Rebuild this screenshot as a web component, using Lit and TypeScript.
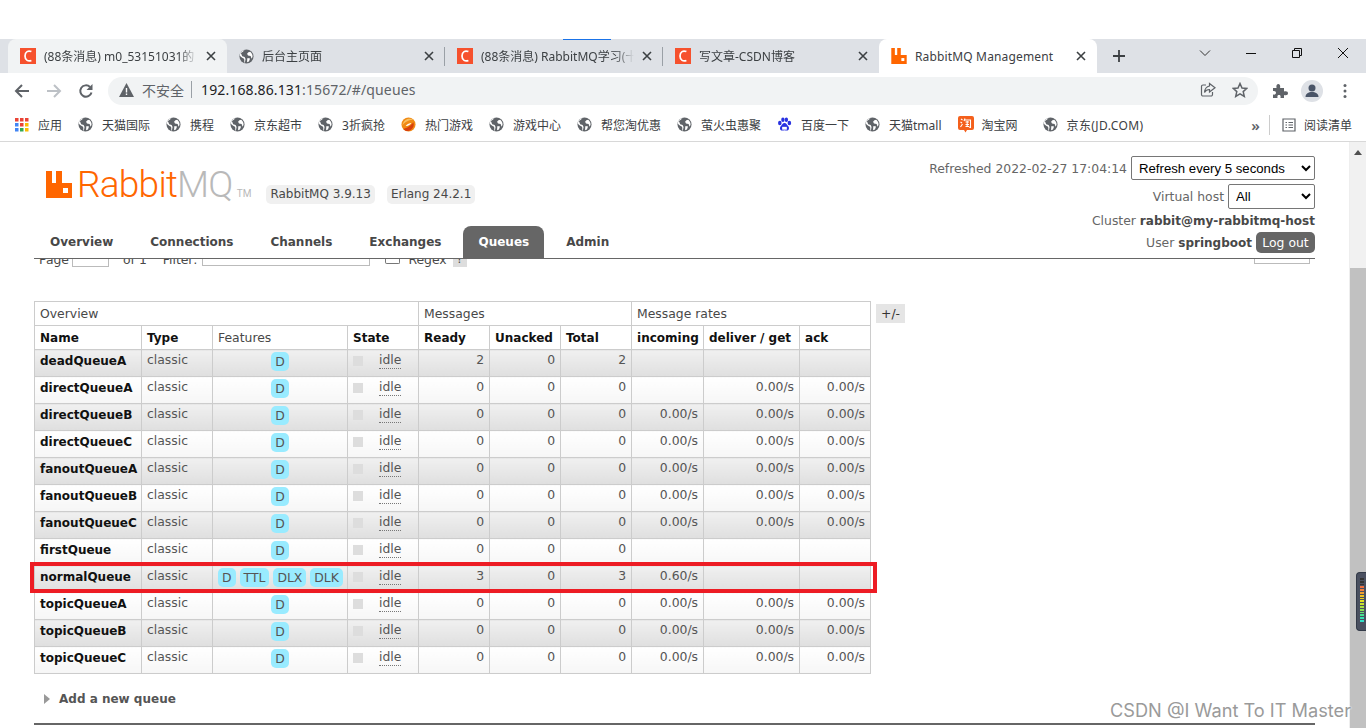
import { LitElement, html, css, svg } from "lit";
import { customElement } from "lit/decorators.js";

const globe = html`<svg class="ico" viewBox="0 0 16 16"><circle cx="8" cy="8" r="7.5" fill="#5f6368"/><path d="M6 1.2C4.8 2.6 3.2 3.2 2 4.2L3.4 7.6 6 8.4 7 10.6 6.2 14.8C5 14.6 6.4 11 5 10.2 3.6 9.6 1.6 8.6 1 7 .8 4 3.2 1.4 6 1.2ZM10 3.4 8.6 5 9.6 7 12.4 7.4 13.4 10.4 14.4 8.6C14.8 6.6 13.8 4.2 12 2.8Z" fill="#fff"/><path d="M9 9.6 11.8 10 10.6 13.2 8.6 14 8.8 11Z" fill="#fff"/></svg>`;
const csdn = html`<svg class="fav" viewBox="0 0 16 16"><rect width="16" height="16" fill="#f6512d"/><path d="M11.4 3.6C8.4 2.2 5 3.6 5 8s3.4 5.8 6.4 4.4" fill="none" stroke="#fff" stroke-width="1.7"/></svg>`;
const rabbitPath = "M0 0h6v12h4V0h6v12h10v15H0Z";
const x = html`<svg class="x" viewBox="0 0 10 10"><path d="M1 1l8 8M9 1l-8 8" stroke="#3c4043" stroke-width="1.6" fill="none"/></svg>`;

const fire = html`<svg class="ico" viewBox="0 0 16 16"><circle cx="8" cy="8" r="7.5" fill="#f08a14"/><path d="M1.5 9C4 5 9 3 13.5 3 10 1 3 1.500 1.500 9Z" fill="#f8c060"/><path d="M2.500 12.500C6 12 11 9 13 5.500 15 9 12 14.500 7 15 5 15 3.500 14 2.500 12.500Z" fill="#d8400c"/><path d="M5 9.500C7 7.500 9 6.500 11 6.500 9.500 8.500 7.500 10 5 9.500Z" fill="#fff"/></svg>`;
const paw = html`<svg class="ico" viewBox="0 0 16 16" fill="#2932e1"><ellipse cx="3" cy="6.500" rx="1.900" ry="2.400"/><ellipse cx="6.300" cy="2.800" rx="1.800" ry="2.400"/><ellipse cx="10" cy="2.800" rx="1.800" ry="2.400"/><ellipse cx="13.200" cy="6.500" rx="1.900" ry="2.400"/><path d="M8 6.500c-2 0-2.400 2-3.800 3-1.600 1.200-1.400 5 1.300 5 1 0 1.700-.4 2.500-.4s1.500.4 2.500.4c2.700 0 2.900-3.800 1.300-5C10.400 8.500 10 6.500 8 6.500Z"/><path d="M5.500 10.500h5v3h-5Z" fill="#fff"/></svg>`;
const taoIco = html`<svg class="ico tao" viewBox="0 0 16 17"><path d="M2 0h12a2 2 0 0 1 2 2v10a2 2 0 0 1-2 2H9l-1.500 2.500L6 14H2a2 2 0 0 1-2-2V2a2 2 0 0 1 2-2Z" fill="#f4601c"/><path d="M3 3l1.500 1M2.500 6l1.500 1M2.500 11l2-3M7 2.500 6 5M6.500 4H12.500V11.500L11 11M7.500 6h3.500M7.500 8.500h3.500M9.200 5v5M7.500 10.500h3.500" stroke="#fff" stroke-width="1.100" fill="none"/></svg>`;

type Bm = { t: string; i?: any; c?: string };
const bookmarks: Bm[] = [
  { t: "天猫国际" }, { t: "携程" }, { t: "京东超市" }, { t: "3折疯抢" },
  { t: "热门游戏", i: fire }, { t: "游戏中心" }, { t: "帮您淘优惠" }, { t: "萤火虫惠聚" },
  { t: "百度一下", i: paw }, { t: "天猫tmall" }, { t: "淘宝网", i: taoIco, c: "tao-item" }, { t: "京东(JD.COM)", c: "wide" },
];

type Row = { n: string; f?: string[]; r: number; u: number; t: number; inc: string; del: string; ack: string };
const z = "0.00/s";
const rows: Row[] = [
  { n: "deadQueueA", r: 2, u: 0, t: 2, inc: "", del: "", ack: "" },
  { n: "directQueueA", r: 0, u: 0, t: 0, inc: "", del: z, ack: z },
  { n: "directQueueB", r: 0, u: 0, t: 0, inc: z, del: z, ack: z },
  { n: "directQueueC", r: 0, u: 0, t: 0, inc: z, del: z, ack: z },
  { n: "fanoutQueueA", r: 0, u: 0, t: 0, inc: z, del: z, ack: z },
  { n: "fanoutQueueB", r: 0, u: 0, t: 0, inc: z, del: z, ack: z },
  { n: "fanoutQueueC", r: 0, u: 0, t: 0, inc: z, del: z, ack: z },
  { n: "firstQueue", r: 0, u: 0, t: 0, inc: "", del: "", ack: "" },
  { n: "normalQueue", f: ["D", "TTL", "DLX", "DLK"], r: 3, u: 0, t: 3, inc: "0.60/s", del: "", ack: "" },
  { n: "topicQueueA", r: 0, u: 0, t: 0, inc: z, del: z, ack: z },
  { n: "topicQueueB", r: 0, u: 0, t: 0, inc: z, del: z, ack: z },
  { n: "topicQueueC", r: 0, u: 0, t: 0, inc: z, del: z, ack: z },
];

const meter = ["#333", "#333", "#333", "#f07040", "#f08040", "#f0a030", "#f0c020", "#e8d020", "#e0e020", "#c8e030", "#a8e040", "#88e050", "#68e070", "#48e090", "#38e0b0", "#30e0c8"];

@customElement("app-root")
export class AppRoot extends LitElement {
  static styles = css`
    :host { display: block; width: 1366px; height: 728px; overflow: hidden; background: #fff; position: relative; font-family: "Noto Sans", "Noto Sans CJK SC", sans-serif; }
    .blank { height: 39px; background: #fff; }
    .tabstrip { height: 34px; background: #dee1e6; display: flex; padding-left: 8px; font-size: 12px; color: #3c4043; position: relative; }
    .blue { position: absolute; left: 563px; top: 0; width: 48px; height: 1px; background: #1a73e8; }
    .tab { width: 218px; display: flex; align-items: center; padding: 0 11px 0 12px; box-sizing: border-box; gap: 8px; border-radius: 8px 8px 0 0; position: relative; white-space: nowrap; }
    .tab .label { flex: 1; overflow: hidden; -webkit-mask-image: linear-gradient(90deg, #000 88%, transparent); }
    .tab.hover { background: #f1f3f4; width: 219px; }
    .tab.narrow { width: 216px; }
    .tab.active { background: #fff; width: 218px; }
    .tab.active .label { -webkit-mask-image: none; letter-spacing: .15px; }
    .tab.sep::after { content: ""; position: absolute; right: 0; top: 8px; height: 19px; width: 1px; background: #9aa0a6; }
    .fav { width: 16px; height: 16px; flex: none; }
    .x { width: 10px; height: 10px; flex: none; }
    .ico { width: 15px; height: 15px; flex: none; }
    .tao { height: 17px; width: 16px; }
    .plus { margin-left: 15px; align-self: center; width: 14px; height: 14px; }
    .winctl { margin-left: auto; display: flex; align-items: center; gap: 30px; padding: 0 15px 6px 0; }
    .winctl svg { width: 16px; height: 16px; display: block; }
    .toolbar { height: 35px; display: flex; align-items: center; padding-left: 14px; box-sizing: border-box; background: #fff; }
    .nav { width: 16px; height: 16px; flex: none; margin-right: 16px; }
    .nav.last { margin-right: 0; }
    .omni { margin-left: 14px; width: 1150px; height: 28px; border-radius: 14px; background: #f1f3f4; display: flex; align-items: center; padding: 0 10px 2px 11px; box-sizing: border-box; font-size: 14px; color: #5f6368; }
    .omni .warn { width: 15px; height: 14px; margin-right: 8px; }
    .omni .insec { width: 44px; font-size: 14px; }
    .omni .div { width: 1px; height: 17px; background: #9aa0a6; margin: 0 9px 0 5px; }
    .omni .url { color: #202124; font-size: 14px; letter-spacing: .12px; flex: 1; }
    .omni .url span { color: #5f6368; }
    .omni svg.r { width: 16px; height: 16px; margin-left: 16px; }
    .after { display: flex; align-items: center; margin-left: 14px; gap: 12px; }
    .after .puzzle { width: 16px; height: 16px; }
    .avatar { width: 22px; height: 22px; margin-left: 1px; }
    .kebab { width: 4px; height: 16px; margin-left: 20px; }
    .bookmarks { height: 33px; border-bottom: 1px solid #d8d8d8; display: flex; align-items: center; font-size: 12px; color: #3c4043; padding-left: 15px; white-space: nowrap; box-sizing: content-box; }
    .apps { width: 14px; height: 14px; margin-right: 9px; flex: none; }
    .apptext { margin-right: 16px; }
    .bm { display: flex; align-items: center; gap: 9px; margin-right: 16px; }
    .bm.tao-item { gap: 8px; margin-right: 25px; }
    .bm.wide { letter-spacing: .4px; margin-right: 0; }
    .more { margin-left: auto; display: flex; align-items: center; font-size: 15px; font-weight: 600; color: #5f6368; }
    .more .div { width: 1px; height: 20px; background: #ccc; margin: 0 12px 0 9px; }
    .more .lst { width: 14px; height: 14px; margin-right: 8px; }
    .more .rd { font-size: 12px; font-weight: 400; color: #3c4043; padding-right: 14px; }

    .viewport { display: flex; height: 586px; }
    .page { flex: none; width: 1349px; font-family: "DejaVu Sans", Verdana, sans-serif; font-size: 12.400px; color: #484848; overflow: hidden; position: relative; box-sizing: border-box; padding-left: 34px; }
    .scroll { flex: 1; background: #f1f1f1; position: relative; display: flex; flex-direction: column; align-items: center; border-left: 1px solid #eee; }
    .arrow { width: 0; height: 0; border: 4px solid transparent; border-bottom: 5px solid #505050; border-top: 0; margin-top: 8px; }
    .thumb { position: absolute; left: 0; right: 0; top: 126px; bottom: 0; background: #c1c1c1; }
    .meter { position: absolute; left: 1356px; top: 572px; width: 10px; height: 59px; background: #4a5060; border: 1px solid #333a48; border-right: 0; border-radius: 4px 0 0 4px; box-sizing: border-box; padding: 5px 1px 0 3px; display: flex; flex-direction: column; gap: 1px; }
    .meter i { display: block; height: 1.800px; width: 4px; }

    .head { display: flex; justify-content: space-between; width: 1281px; height: 116px; border-bottom: 1px solid #666; box-sizing: content-box; }
    .left { display: flex; flex-direction: column; }
    .brand { display: flex; align-items: flex-start; padding: 29px 0 0 12px; height: 55px; box-sizing: border-box; }
    .brand svg { width: 26px; height: 27px; flex: none; margin-right: 5px; }
    .word { font-family: "Roboto", sans-serif; font-weight: 300; font-size: 37px; line-height: 28px; letter-spacing: -.75px; color: #f60; white-space: nowrap; }
    .word b { font-weight: 300; color: #b9b9b9; }
    .word sup { font-size: 10px; color: #b9b9b9; letter-spacing: 0; vertical-align: baseline; margin-left: 4px; font-weight: 400; }
    .ver { margin: 14px 0 0 15px; display: flex; gap: 12px; white-space: nowrap; }
    .ver span { background: #f0f0f0; border-radius: 5px; height: 19px; line-height: 19px; padding: 0 4px; font-size: 12px; color: #484848; }
    .nav-tabs { display: flex; gap: 7px; margin: 29px 0 0 1px; height: 32px; font-weight: 700; font-size: 12px; color: #484848; }
    .nav-tabs span { padding: 0 15px; line-height: 33px; border-radius: 8px 8px 0 0; }
    .nav-tabs span.on { background: #666; color: #fff; }
    .right { display: flex; flex-direction: column; align-items: flex-end; padding-top: 14px; color: #666; white-space: nowrap; }
    .right .l { display: flex; align-items: center; gap: 4px; }
    .right strong { color: #484848; font-size: 12px; }
    select { border: 1px solid #767676; border-radius: 2px; box-sizing: border-box; background: #fff; color: #000; font-family: "Liberation Sans", sans-serif; font-size: 13.200px; height: 24px; padding: 0 0 0 3px; margin: 0; }
    .s1 { width: 184px; }
    .s2 { width: 87px; height: 25px; }
    .r2 { margin-top: 4px; }
    .r3 { margin-top: 4px; height: 16px; line-height: 16px; }
    .r4 { margin-top: 3px; }
    .logout { background: #666; color: #fff; border-radius: 5px; height: 21px; line-height: 21px; padding: 0 6px; font-weight: 400; font-size: 12.400px; width: 59px; box-sizing: border-box; text-align: center; }

    .clip { height: 8px; width: 1281px; overflow: hidden; position: relative; margin-bottom: 34px; }
    .peek { display: flex; align-items: flex-end; height: 8px; }
    .peek-text { margin: -6px 0 0 5px; line-height: 14px; align-self: flex-start; white-space: nowrap; }
    .peek-text.of { margin-left: 14px; }
    .peek-text.filter { margin-left: 16px; }
    .peek-text.regex { margin-left: 8px; }
    .ibox { border: 1px solid #bbb; border-top: 0; box-sizing: border-box; align-self: flex-start; }
    .i1 { width: 37px; height: 8px; margin-left: 3px; }
    .i2 { width: 168px; height: 7px; margin-left: 5px; }
    .cb { width: 13px; height: 4px; border: 1px solid #777; border-top: 0; border-radius: 0 0 2px 2px; margin-left: 15px; align-self: flex-start; }
    .q { width: 14px; height: 8px; background: #ddd; margin-left: 6px; align-self: flex-start; text-align: center; font-size: 12px; line-height: 0; }
    .i3 { width: 56px; height: 5px; margin-left: auto; margin-right: 5px; }

    .tablewrap { position: relative; display: flex; align-items: flex-start; gap: 5px; }
    table { border-collapse: collapse; table-layout: fixed; width: 836px; }
    th, td { border: 1px solid #ccc; padding: 0 5px; box-sizing: border-box; font-size: 12.400px; white-space: nowrap; overflow: hidden; }
    th { height: 24px; text-align: left; font-weight: 400; color: #484848; }
    tr.cols th { color: #111; font-weight: 700; font-size: 12px; }
    tr.cols th.plain { font-weight: 400; font-size: 12.400px; color: #484848; }
    td { height: 27px; vertical-align: top; padding-top: 2px; color: #555; line-height: 15px; }
    td.name { font-weight: 700; font-size: 12px; color: #111; padding-top: 4px; }
    td.num { text-align: right; }
    tbody tr.odd td { background: linear-gradient(#f0f0f0, #dfdfdf); }
    tbody tr.even td { background: linear-gradient(#fff, #f6f6f6); }
    td.ft { text-align: center; padding: 2px 5px 0; white-space: nowrap; }
    td.ft .p { display: inline-block; background: #99ebff; border-radius: 5px; height: 19px; line-height: 20px; padding: 0 4px; color: #555; margin-right: 4px; font-size: 12.400px; }
    td.ft .p:last-child { margin-right: 0; }
    .stwrap { display: flex; align-items: flex-start; }
    .stwrap i { width: 10px; height: 10px; background: #ddd; margin: 4px 16px 0 0; flex: none; }
    .stwrap span { border-bottom: 1px dotted #777; height: 16px; line-height: 15px; }
    .plusminus { background: #e5e5e5; width: 29px; height: 19px; line-height: 19px; text-align: center; margin-top: 3px; font-size: 12.400px; color: #333; }
    .mark { position: absolute; left: -4px; top: 261px; width: 847px; height: 31px; border: 4px solid #ed1c24; box-sizing: border-box; pointer-events: none; }
    .add { display: flex; align-items: center; gap: 9px; margin: 17px 0 0 10px; height: 16px; font-weight: 700; font-size: 12px; color: #555; }
    .add i { width: 0; height: 0; border-left: 6px solid #999; border-top: 5px solid transparent; border-bottom: 5px solid transparent; }
    .hr { width: 1281px; height: 2px; background: #666; margin-top: 16px; }
    .wm { position: absolute; left: 1110px; top: 697px; font-family: "Inter", "Noto Sans", sans-serif; font-size: 18.200px; line-height: 26px; color: #9a9a9a; text-shadow: 0 0 2px #fff, 0 0 2px #fff; white-space: nowrap; z-index: 3; }
  `;

  renderFeatures(f: string[]) {
    return f.map((p) => html`<span class="p">${p}</span>`);
  }

  render() {
    return html`
      <div class="blank"></div>
      <div class="tabstrip">
        <div class="blue"></div>
        <div class="tab hover">${csdn}<span class="label">(88条消息) m0_53151031的</span>${x}</div>
        <div class="tab sep">${globe}<span class="label">后台主页面</span>${x}</div>
        <div class="tab sep">${csdn}<span class="label">(88条消息) RabbitMQ学习(十</span>${x}</div>
        <div class="tab narrow">${csdn}<span class="label">写文章-CSDN博客</span>${x}</div>
        <div class="tab active">
          <svg class="fav" viewBox="0 0 26 27"><path d="${rabbitPath}" fill="#f60"/><rect x="17" y="17" width="5" height="5" fill="#fff"/></svg>
          <span class="label">RabbitMQ Management</span>${x}
        </div>
        <svg class="plus" viewBox="0 0 14 14"><path d="M7 1v12M1 7h12" stroke="#3c4043" stroke-width="1.800"/></svg>
        <div class="winctl">
          <svg viewBox="0 0 16 16"><path d="M3 5.500l5 5 5-5" fill="none" stroke="#333" stroke-width="1"/></svg>
          <svg viewBox="0 0 16 16"><path d="M3 8.500h10" stroke="#111" stroke-width="1"/></svg>
          <svg viewBox="0 0 16 16"><path d="M3.500 5.500h7v7h-7ZM5.500 5.500v-2h7v7h-2" fill="none" stroke="#111" stroke-width="1"/></svg>
          <svg viewBox="0 0 16 16"><path d="M3 3l10 10M13 3L3 13" stroke="#111" stroke-width="1"/></svg>
        </div>
      </div>
      <div class="toolbar">
        <svg class="nav" viewBox="0 0 16 16"><path d="M15 8H2M8 2 2 8l6 6" fill="none" stroke="#5f6368" stroke-width="2"/></svg>
        <svg class="nav" viewBox="0 0 16 16"><path d="M1 8h13M8 2l6 6-6 6" fill="none" stroke="#bdc1c6" stroke-width="2"/></svg>
        <svg class="nav last" viewBox="0 0 16 16"><path d="M13.500 9.500A5.700 5.700 0 1 1 12 4" fill="none" stroke="#5f6368" stroke-width="2"/><path d="M14.500 1v6h-6Z" fill="#5f6368"/></svg>
        <div class="omni">
          <svg class="warn" viewBox="0 0 15 14"><path d="M7.500 0 15 14H0Z" fill="#5f6368"/><path d="M6.800 5h1.400v4.500H6.800ZM6.800 10.500h1.400V12H6.800Z" fill="#fff"/></svg>
          <span class="insec">不安全</span><span class="div"></span>
          <span class="url">192.168.86.131<span>:15672/#/queues</span></span>
          <svg class="r" viewBox="0 0 16 16"><path d="M6 3H3a1.500 1.500 0 0 0-1.500 1.500v8A1.500 1.500 0 0 0 3 14h8a1.500 1.500 0 0 0 1.500-1.500V10" fill="none" stroke="#5f6368" stroke-width="1.200"/><path d="M9.500 1.500 15 5.800 9.500 10V7.500C7 7.500 5.500 8.500 4.500 10.500 4.800 7 6.500 4.500 9.500 4Z" fill="none" stroke="#5f6368" stroke-width="1.200"/></svg>
          <svg class="r" viewBox="0 0 16 16"><path d="m8 1.500 2 4.500 4.800.4-3.600 3.200 1.100 4.800L8 11.900l-4.300 2.500 1.100-4.800L1.200 6.400 6 6Z" fill="none" stroke="#5f6368" stroke-width="1.500"/></svg>
        </div>
        <div class="after">
          <svg class="puzzle" viewBox="0 0 16 16"><path d="M1 5h3.500C4 2 5 1 6.300 1s2.300 1 1.800 4H12v3.500c3-.6 4 .5 4 1.800s-1 2.400-4 1.800V15H8.500c.5-2.500-.5-3-1.500-3s-2 .5-1.500 3H1v-3.500c2 .5 3-.5 3-1.700S3 7.500 1 8Z" fill="#5f6368"/></svg>
          <svg class="avatar" viewBox="0 0 22 22"><circle cx="11" cy="11" r="11" fill="#dee1e6"/><circle cx="11" cy="8" r="3.500" fill="#4a5568"/><path d="M4.500 17c0-3.500 3-5 6.500-5s6.500 1.500 6.500 5Z" fill="#4a5568"/></svg>
        </div>
        <svg class="kebab" viewBox="0 0 4 16"><circle cx="2" cy="2.500" r="1.500" fill="#5f6368"/><circle cx="2" cy="8" r="1.500" fill="#5f6368"/><circle cx="2" cy="13.500" r="1.500" fill="#5f6368"/></svg>
      </div>
      <div class="bookmarks">
        <svg class="apps" viewBox="0 0 14 14">
          ${[["#ea4335", 0, 0], ["#ea4335", 5, 0], ["#ea4335", 10, 0], ["#4285f4", 0, 5], ["#ea4335", 5, 5], ["#fbbc04", 10, 5], ["#4285f4", 0, 10], ["#34a853", 5, 10], ["#fbbc04", 10, 10]].map(
            (c) => svg`<rect x="${c[1]}" y="${c[2]}" width="3.500" height="3.500" fill="${c[0]}"/>`
          )}
        </svg>
        <span class="apptext">应用</span>
        ${bookmarks.map((b) => html`<span class="bm ${b.c ?? ""}">${b.i ?? globe}<span>${b.t}</span></span>`)}
        <div class="more">
          <span>»</span><span class="div"></span>
          <svg class="lst" viewBox="0 0 14 14"><path d="M1 1h12v12H1ZM3.500 4.500h1.500M6.500 4.500h4.500M3.500 7h1.500M6.500 7h4.500M3.500 9.500h1.500M6.500 9.500h4.500" fill="none" stroke="#5f6368" stroke-width="1.200"/></svg>
          <span class="rd">阅读清单</span>
        </div>
      </div>
      <div class="viewport">
        <div class="page">
          <div class="head">
            <div class="left">
              <div class="brand">
                <svg viewBox="0 0 26 27"><path d="${rabbitPath}" fill="#f60"/><rect x="17" y="17" width="5" height="5" fill="#fff"/></svg>
                <div class="word">Rabbit<b>MQ</b><sup>TM</sup></div>
                <div class="ver"><span>RabbitMQ 3.9.13</span><span>Erlang 24.2.1</span></div>
              </div>
              <div class="nav-tabs">
                <span>Overview</span><span>Connections</span><span>Channels</span><span>Exchanges</span><span class="on">Queues</span><span>Admin</span>
              </div>
            </div>
            <div class="right">
              <div class="l">Refreshed 2022-02-27 17:04:14
                <select class="s1"><option>Refresh every 5 seconds</option></select>
              </div>
              <div class="l r2">Virtual host
                <select class="s2"><option>All</option></select>
              </div>
              <div class="r3">Cluster <strong>rabbit@my-rabbitmq-host</strong></div>
              <div class="l r4"><span>User <strong>springboot</strong></span><span class="logout">Log out</span></div>
            </div>
          </div>
          <div class="clip">
            <div class="peek">
              <span class="peek-text">Page</span><span class="ibox i1"></span>
              <span class="peek-text of">of 1</span><span class="peek-text filter">Filter:</span>
              <span class="ibox i2"></span><span class="cb"></span>
              <span class="peek-text regex">Regex</span><span class="q">?</span>
              <span class="ibox i3"></span>
            </div>
          </div>
          <div class="tablewrap">
            <table>
              <colgroup>
                <col style="width:107px"/><col style="width:71px"/><col style="width:135px"/><col style="width:71px"/><col style="width:71px"/><col style="width:71px"/><col style="width:71px"/><col style="width:72px"/><col style="width:96px"/><col style="width:71px"/>
              </colgroup>
              <thead>
                <tr><th colspan="4">Overview</th><th colspan="3">Messages</th><th colspan="3">Message rates</th></tr>
                <tr class="cols"><th>Name</th><th>Type</th><th class="plain">Features</th><th>State</th><th>Ready</th><th>Unacked</th><th>Total</th><th>incoming</th><th>deliver / get</th><th>ack</th></tr>
              </thead>
              <tbody>
                ${rows.map(
                  (r, i) => html`<tr class=${i % 2 ? "even" : "odd"}>
                    <td class="name">${r.n}</td><td>classic</td>
                    <td class="ft">${this.renderFeatures(r.f ?? ["D"])}</td>
                    <td class="st"><div class="stwrap"><i></i><span>idle</span></div></td>
                    <td class="num">${r.r}</td><td class="num">${r.u}</td><td class="num">${r.t}</td>
                    <td class="num">${r.inc}</td><td class="num">${r.del}</td><td class="num">${r.ack}</td>
                  </tr>`
                )}
              </tbody>
            </table>
            <div class="plusminus">+/-</div>
            <div class="mark"></div>
          </div>
          <div class="add"><i></i><span>Add a new queue</span></div>
          <div class="hr"></div>
        </div>
        <div class="scroll"><div class="arrow"></div><div class="thumb"></div></div>
      </div>
      <div class="meter">${meter.map((c) => html`<i style="background:${c}"></i>`)}</div>
      <div class="wm">CSDN @I Want To IT Master</div>
    `;
  }
}
